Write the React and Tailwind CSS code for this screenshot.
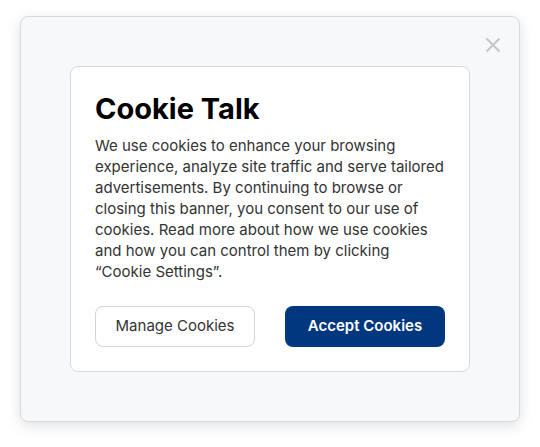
export default function App() {
    return (
        <div className="w-[540px] h-[447px] bg-white pt-4 pl-5" style={{ fontFamily: "Inter, 'Noto Sans', sans-serif" }}>
            <div className="relative w-[500px] h-[406px] bg-[#f7f8fa] border border-[#d9d9dc] rounded-lg shadow-[0_4px_14px_rgba(0,0,0,0.12)] p-[49px]">
                {/* close */}
                <button className="absolute top-[20px] right-[18px] text-[#c4c6ca]">
                    <svg width="16" height="16" viewBox="0 0 16 16" fill="none" stroke="currentColor" strokeWidth="2">
                        <path d="M1.5 1.5L14.5 14.5M14.5 1.5L1.5 14.5" />
                    </svg>
                </button>

                <div className="bg-white border border-[#d9d9dc] rounded-lg px-6 pt-[23px] pb-6">
                    <h2 className="text-[29px] leading-[38px] font-bold text-black">Cookie Talk</h2>
                    <p className="mt-[7px] text-[15px] leading-[21px] text-[#333]">
                        We use cookies to enhance your browsing experience, analyze site traffic and serve tailored advertisements. By continuing to browse or closing this banner, you consent to our use of cookies. Read more about how we use cookies and how you can control them by clicking “Cookie Settings”.
                    </p>

                    <div className="mt-[24px] flex justify-between">
                        <button className="w-[160px] h-[41px] rounded-lg border border-[#d4d4d8] bg-white text-[15px] text-[#333]">
                            Manage Cookies
                        </button>
                        <button className="w-[160px] h-[41px] rounded-lg bg-[#01377f] text-[15px] font-semibold text-white">
                            Accept Cookies
                        </button>
                    </div>
                </div>
            </div>
        </div>
    );
}
